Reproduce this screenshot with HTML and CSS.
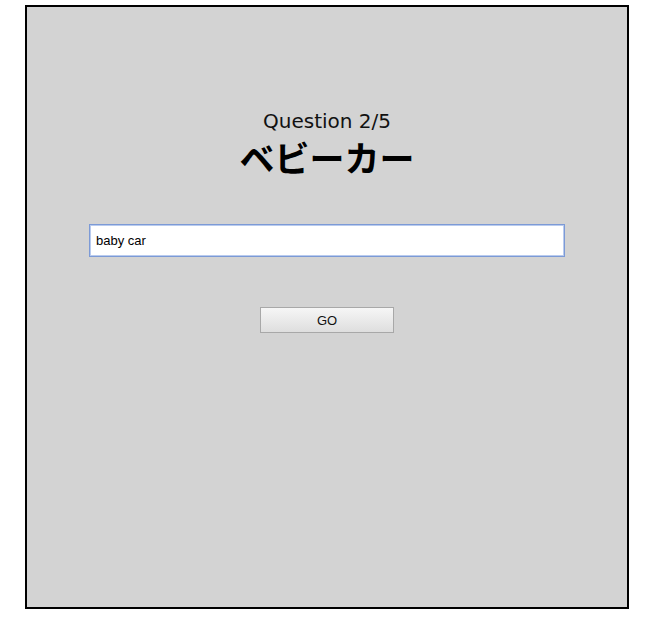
FILE: index.html
```html
<!DOCTYPE html>
<html>
<head>
<meta charset="utf-8">
<link rel="stylesheet" href="styles.css">
</head>
<body>
<div class="box">
  <div class="question">Question 2/5</div>
  <div class="word">ベビーカー</div>
  <div class="field"><input class="answer" type="text" value="baby car"></div>
  <div class="actions"><button class="go">GO</button></div>
</div>
</body>
</html>
```
FILE: styles.css
```css
html, body { margin: 0; background: #fff; }
body { padding: 5px 0 0 25px; }
.box {
  box-sizing: border-box;
  width: 604px;
  height: 604px;
  border: 2px solid #000;
  background: #d3d3d3;
  display: flex;
  flex-direction: column;
  align-items: center;
  padding-top: 100px;
}
.question {
  font-family: "DejaVu Sans", Verdana, sans-serif;
  font-size: 20px;
  line-height: 28px;
  color: #111;
}
.word {
  font-family: "Noto Sans CJK JP", sans-serif;
  font-weight: 700;
  font-size: 35px;
  line-height: 44px;
  color: #000;
}
.field { margin-top: 45px; }
.answer {
  box-sizing: border-box;
  width: 476px;
  height: 33px;
  border: 1px solid #7c9ad6;
  box-shadow: inset 0 0 0 1px #b9cbee;
  background: #fff;
  padding: 0 6px;
  font-family: "Liberation Sans", Arial, sans-serif;
  font-size: 13px;
  color: #000;
  outline: none;
}
.actions { margin-top: 50px; }
.go {
  box-sizing: border-box;
  width: 134px;
  height: 26px;
  border: 1px solid #a8a8a8;
  background: linear-gradient(#f6f6f6, #dedede);
  font-family: "Liberation Sans", Arial, sans-serif;
  font-size: 13px;
  color: #111;
  padding: 0;
}
```
